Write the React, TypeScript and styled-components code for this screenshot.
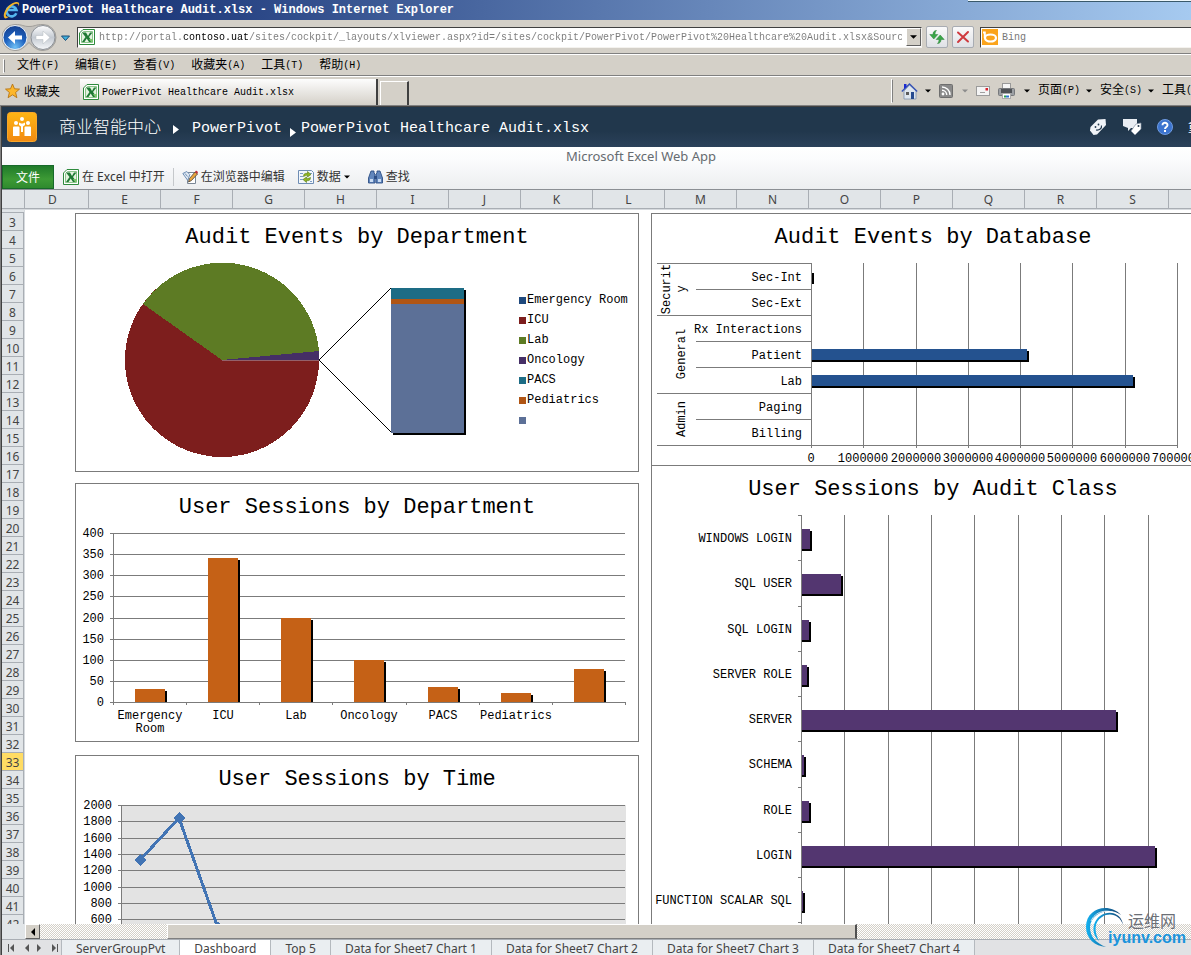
import React from 'react';
import styled, { createGlobalStyle } from 'styled-components';

const mono = `"Liberation Mono", "Noto Sans CJK SC", monospace`;
const ui = `"Noto Sans", "Noto Sans CJK SC", sans-serif`;
const chrome = '#d4d0c8';
const line = '#7b7b7b';

const GlobalStyle = createGlobalStyle`
  * { box-sizing: border-box; }
  body { margin: 0; overflow: hidden; background: ${chrome}; }
  button { border: 0; padding: 0; margin: 0; background: none; font: inherit; color: inherit; cursor: pointer; }
  input { border: 0; padding: 0; margin: 0; outline: 0; }
  h1, h2, ul { margin: 0; padding: 0; font-weight: normal; }
  ul { list-style: none; }
  svg { display: block; flex: none; }
`;

const Window = styled.div`
  display: flex;
  flex-direction: column;
  height: 100vh;
  overflow: hidden;
  font-family: ${mono};
  font-size: 12px;
  white-space: nowrap;
  color: #000;
`;

/* ---------- browser chrome ---------- */

const TitleBar = styled.header`
  display: flex;
  align-items: center;
  gap: 2px;
  height: 20px;
  flex: none;
  padding-left: 3px;
  color: #fff;
  background: linear-gradient(90deg, #0a246a, #a6caf0);
`;

const WindowTitle = styled.h1`
  flex: 1;
  font-size: 12px;
  line-height: 20px;
  font-weight: bold;
`;

const BackgroundWindow = styled.div`
  align-self: flex-start;
  width: 223px;
  height: 2px;
  background: #eef7fb;
  border-bottom: 1px solid #39596b;
`;

const AddressRow = styled.div`
  display: flex;
  align-items: center;
  height: 35px;
  flex: none;
  padding-left: 2px;
  background: ${chrome};
  border-bottom: 1px solid #fff;
  box-shadow: inset 0 -1px #808080;
`;

const NavButtons = styled.div`
  display: flex;
  align-items: center;
  width: 75px;
`;

const Field = styled.div<{ $grow?: boolean }>`
  display: flex;
  align-items: center;
  gap: 4px;
  height: 21px;
  padding-left: 1px;
  background: #fff;
  border: 1px solid #404040;
  border-color: #404040 #f4f2ee #f4f2ee #404040;
  overflow: hidden;
  ${p => (p.$grow ? 'flex: 1; min-width: 0;' : 'width: 211px; border-right: 0;')}
`;

const AddressInput = styled.input`
  flex: 1;
  min-width: 0;
  height: 16px;
  font-family: ${mono};
  font-size: 10px;
  color: transparent;
  background: linear-gradient(90deg, #7a7a7a 14ch, #000 14ch, #000 25ch, #7a7a7a 25ch);
  background-clip: text;
`;

const SearchInput = styled.input`
  flex: 1;
  min-width: 0;
  font-family: ${mono};
  font-size: 10px;
  color: #777;
  background: transparent;
  &::placeholder { color: #777; opacity: 1; }
`;

const DropButton = styled.button`
  display: flex;
  align-items: center;
  justify-content: center;
  width: 15px;
  height: 18px;
  background: ${chrome};
  border: 1px solid #fff;
  border-color: #fff #606060 #606060 #fff;
`;

const ScrollButton = styled(DropButton)`
  height: 15px;
`;

const SquareButton = styled.button`
  display: flex;
  align-items: center;
  justify-content: center;
  width: 22px;
  height: 22px;
  margin-left: 4px;
  border: 1px solid #a8acb2;
  border-radius: 2px;
  background: linear-gradient(#fafafa, #dfe1e6);
  &:last-of-type { margin-right: 6px; }
`;

const MenuBar = styled.nav`
  display: flex;
  align-items: center;
  gap: 16px;
  height: 22px;
  flex: none;
  padding-left: 3px;
  background: ${chrome};
  border-bottom: 1px solid #fff;
  box-shadow: inset 0 -1px #808080;
`;

const Handle = styled.span<{ $tall?: boolean }>`
  flex: none;
  width: 2px;
  height: ${p => (p.$tall ? 24 : 14)}px;
  margin-right: ${p => (p.$tall ? 0 : -4)}px;
  border: 1px solid #fff;
  border-right-color: #808080;
`;

const MenuButton = styled.button`
  display: flex;
  align-items: center;
  line-height: 20px;
`;

const CommandLabel = styled.span`
  display: flex;
  align-items: center;
`;

const AccessKey = styled.span`
  font-size: 10px;
`;

const TabsRow = styled.div`
  display: flex;
  align-items: center;
  height: 28px;
  flex: none;
  background: ${chrome};
`;

const Favorites = styled.button`
  display: flex;
  align-items: center;
  gap: 4px;
  width: 75px;
  margin-left: 5px;
`;

const PageTab = styled.button`
  display: flex;
  align-items: center;
  gap: 3px;
  align-self: flex-end;
  width: 298px;
  height: 26px;
  padding-left: 3px;
  font-size: 10px;
  background: linear-gradient(#fdfdfd, ${chrome});
  border-right: 2px solid #404040;
`;

const NewTab = styled.button`
  align-self: flex-end;
  width: 29px;
  height: 24px;
  margin-left: 2px;
  border: 1px solid #fff;
  border-right: 2px solid #404040;
  border-bottom: 0;
`;

const CommandBar = styled.div`
  display: flex;
  align-items: center;
  gap: 8px;
  width: 300px;
  margin-left: auto;
  overflow: hidden;
`;

const Command = styled.button<{ $gap?: number }>`
  display: flex;
  align-items: center;
  gap: ${p => p.$gap ?? 6}px;
  flex: none;
  line-height: 20px;
`;

/* ---------- portal page ---------- */

const Page = styled.main`
  display: flex;
  flex-direction: column;
  flex: 1;
  min-height: 0;
  padding: 1px 0 0 1px;
  border: solid #808080;
  border-width: 1px 0 0 1px;
  background: #404040;
`;

const Ribbon = styled.div`
  display: flex;
  align-items: center;
  height: 40px;
  flex: none;
  padding-left: 5px;
  color: #fff;
  background: linear-gradient(#21374c 60%, #2b415a);
`;

const Crumbs = styled.nav`
  display: flex;
  align-items: center;
  flex: 1;
  min-width: 0;
  margin-left: 22px;
  padding-top: 4px;
  font-size: 15px;
`;

const Crumb = styled.a<{ $cjk?: boolean }>`
  color: #fff;
  text-decoration: none;
  font-size: ${p => (p.$cjk ? 17 : 15)}px;
  font-weight: 300;
  line-height: 32px;
`;

const CrumbArrow = styled.span<{ $wide?: boolean }>`
  padding: ${p => (p.$wide ? '0 13px 0 12px' : '6px 5px 0 8px')};
`;

const PortalActions = styled.div`
  display: flex;
  align-items: center;
  gap: 15px;
  width: 102px;
  overflow: hidden;
`;

const PortalButton = styled.button`
  flex: none;
  font-size: 12px;
`;

const AppHead = styled.div`
  flex: none;
  font-family: ${ui};
  background: linear-gradient(#fff, #fbfcfd 30%, #eceef0);
  border-bottom: 1px solid #8b8f94;
`;

const AppName = styled.div`
  height: 18px;
  line-height: 18px;
  padding-right: 103px;
  padding-left: 192px;
  text-align: center;
  font-size: 13px;
  color: #666b70;
`;

const Tools = styled.div`
  display: flex;
  align-items: center;
  height: 24px;
  color: #333;
`;

const FileButton = styled.button`
  width: 52px;
  height: 24px;
  margin-right: 9px;
  color: #fff;
  line-height: 24px;
  background: linear-gradient(#1f7a2a, #3d9a35 60%, #2f8a2e);
  border: 1px solid #17692a;
`;

const Tool = styled.button<{ $after: number }>`
  display: flex;
  align-items: center;
  gap: 3px;
  margin-right: ${p => p.$after}px;
  line-height: 22px;
`;

const ToolDivider = styled.span`
  width: 1px;
  height: 18px;
  margin-right: 8px;
  background: #c5c8cb;
`;

/* ---------- worksheet ---------- */

const ColumnHeads = styled.div`
  display: flex;
  height: 20px;
  flex: none;
  overflow: hidden;
  font-family: ${ui};
  color: #444;
  background: #e1e5e8;
  border-bottom: 1px solid #d6dade;
`;

const ColumnHead = styled.div<{ $w: number; $cut?: number }>`
  width: ${p => p.$w - (p.$cut ?? 0)}px;
  padding-right: ${p => p.$cut ?? 0}px;
  flex: none;
  text-align: center;
  line-height: 20px;
  border: solid #a9aeb4;
  border-width: 0 1px 1px 0;
`;

const Sheet = styled.div`
  display: flex;
  flex: 1;
  min-height: 0;
  overflow: hidden;
  background: #fff;
`;

const RowHeads = styled.div`
  width: 23px;
  flex: none;
  padding-top: 2px;
  font-family: ${ui};
  color: #444;
  background: #e1e5e8;
  border-right: 1px solid #d6dade;
  overflow: hidden;
`;

const RowHead = styled.div<{ $active?: boolean }>`
  height: 18px;
  line-height: 20px;
  text-align: center;
  background: ${p => (p.$active ? '#ffdc64' : 'transparent')};
  border: solid #a9aeb4;
  border-width: 0 1px 1px 0;
  &:first-child { height: 1px; }
`;

const Dashboard = styled.div`
  display: flex;
  align-items: flex-start;
  gap: 12px;
  flex: 1;
  min-width: 0;
  padding: 3px 0 0 50px;
  overflow: hidden;
`;

const ChartColumn = styled.div`
  width: 564px;
  flex: none;
`;

const ChartCard = styled.section<{ $after?: number; $open?: boolean }>`
  border: 1px solid ${line};
  ${p => p.$open && 'border-bottom: 0;'}
  margin-bottom: ${p => p.$after ?? 0}px;
  background: #fff;
`;

const ChartTitle = styled.h2`
  padding-top: 2px;
  font-size: 22px;
  line-height: 44px;
  text-align: center;
`;

const ChartBody = styled.div`
  display: flex;
  align-items: flex-start;
`;

const Plot = styled.svg`
  overflow: visible;
  font-family: ${mono};
  font-size: 12px;
  shape-rendering: crispEdges;
`;

const Legend = styled.ul`
  padding-top: 30px;
`;

const LegendItem = styled.li<{ $color: string }>`
  display: flex;
  align-items: center;
  gap: 1px;
  height: 20px;
  &::before {
    content: '';
    width: 7px;
    height: 7px;
    background: ${p => p.$color};
  }
`;

const ScrollRow = styled.div`
  display: flex;
  height: 15px;
  flex: none;
  padding-left: 23px;
  background: #e1e5e8;
`;

const ScrollTrack = styled.div`
  display: flex;
  flex: 1;
  background: repeating-conic-gradient(${chrome} 0 25%, #fff 0 50%) 0 0 / 2px 2px;
`;

const ScrollThumb = styled.div`
  width: 60%;
  margin-left: 11%;
  background: ${chrome};
  border: 1px solid #fff;
  border-right: 2px solid #505050;
  border-bottom-color: #808080;
`;

const SheetBar = styled.nav`
  display: flex;
  height: 16px;
  flex: none;
  overflow: hidden;
  font-family: ${ui};
  color: #444;
  background: #e1e2e4;
  border-top: 1px solid #a9aeb4;
`;

const SheetNav = styled.div`
  display: flex;
  align-items: center;
  justify-content: space-between;
  width: 60px;
  padding: 0 2px 0 5px;
  border-right: 1px solid #b4b9be;
`;

const SheetTab = styled.button<{ $active?: boolean }>`
  padding: 0 14px;
  line-height: 18px;
  flex: none;
  background: ${p => (p.$active ? '#fff' : '#eaeef1')};
  border-right: 1px solid #b4b9be;
`;

const Watermark = styled.div`
  position: absolute;
  right: 4px;
  bottom: 6px;
  display: flex;
  color: #6b6f76;
`;

const WatermarkText = styled.div`
  display: flex;
  flex-direction: column;
  align-items: flex-end;
  margin-left: -18px;
  padding: 4px 1px 0 0;
  font-family: "Noto Sans CJK SC", sans-serif;
  font-size: 16px;
  line-height: 18px;
`;

const WatermarkTop = styled.span`
  padding-right: 10px;
`;

const WatermarkSite = styled.span`
  font-family: "Liberation Sans", sans-serif;
  font-weight: bold;
  color: #1a94dc;
`;

/* ---------- icons ---------- */

const Caret = ({ color = '#000', w = 7 }: { color?: string; w?: number }) => (
  <svg width={w} height={4} viewBox="0 0 8 4"><path d="M0 0h8L4 4z" fill={color} /></svg>
);

const RightArrow = () => (
  <svg width="6" height="9" viewBox="0 0 6 9"><path d="M0 0l6 4.500-6 4.500z" fill="#fff" /></svg>
);

const IeIcon = () => (
  <svg width="17" height="18" viewBox="0 0 17 18">
    <path d="M13.300 12.300A5 5 0 1 1 13.500 9H5" fill="none" stroke="#55b7ee" strokeWidth="2.600" />
    <path d="M1.500 17C-1.500 13 5 3 12 1.200c4-1 5 1 3.500 4.300.5-3-2-3.500-5.500-1.500C6 6.500 2 12 3 15c.5 1 2 .8 3.500 0-2 2-4 3-5 2z" fill="#f3b52a" />
  </svg>
);

const ExcelIcon = () => (
  <svg width="16" height="16" viewBox="0 0 16 16">
    <path d="M4 .5h11.500v15H.5V4z" fill="#fff" stroke="#2e8b3d" />
    <path d="M2.500 4.500L4.500 2.500h9v11h-11z" fill="#e3f3df" stroke="#8cc58b" />
    <path d="M3 3.500h4l2 3.500 2-3.500h2.500L10 8l3.500 5H10L7.700 9.500 5.500 13H3l3.500-5z" fill="#1f7a34" />
    <path d="M10 10l2 3h2v-3z" fill="#7cc66f" />
  </svg>
);

const NavIcon = () => (
  <svg width="69" height="27" viewBox="0 0 69 27">
    <defs>
      <radialGradient id="back" cx=".5" cy=".9" r=".9"><stop offset="0" stopColor="#6fc0f5" /><stop offset=".5" stopColor="#1e62c0" /><stop offset="1" stopColor="#16408f" /></radialGradient>
      <linearGradient id="fwd" x2="0" y2="1"><stop offset="0" stopColor="#fff" /><stop offset=".5" stopColor="#c4cad2" /><stop offset="1" stopColor="#f6f8fa" /></linearGradient>
    </defs>
    <path d="M13 .5c8 0 8 2 14 2s6-2 14-2a13 13 0 0 1 0 26c-6 0-9-3-14-8-5 5-8 8-14 8a13 13 0 0 1 0-26z" fill="#c4c2be" stroke="#a09e9a" />
    <circle cx="13" cy="13.500" r="12" fill="url(#back)" stroke="#eef3f8" />
    <circle cx="41" cy="13.500" r="12" fill="url(#fwd)" stroke="#8b9096" />
    <path d="M6 13.500l7-6.500v4.500h7v4h-7V20z" fill="#fff" />
    <path d="M48 13.500L41 7v4.500h-7v4h7V20z" fill="#fff" stroke="#b3b8be" strokeWidth=".5" />
    <path d="M59.500 12h8l-4 4.500z" fill="#3fb0de" stroke="#1b4f78" />
  </svg>
);

const RefreshIcon = () => (
  <svg width="16" height="16" viewBox="0 0 16 16">
    <path d="M7.500 1.500C4.500 1.500 4 4 4 5.500H.8L4.800 10l4-4.500H6C6 4 6.500 2.500 7.500 1.500z" fill="#3aa648" stroke="#2b8038" strokeWidth=".5" />
    <path d="M8.500 14.500c3 0 3.500-2.500 3.500-4h3.200L11.200 6l-4 4.500H10c0 1.500-.5 3-1.500 4z" fill="#3aa648" stroke="#2b8038" strokeWidth=".5" />
  </svg>
);

const StopIcon = () => (
  <svg width="14" height="14" viewBox="0 0 14 14"><path d="M2 2.500l10 9M12 2L2 12" stroke="#cf3a3f" strokeWidth="2" strokeLinecap="round" /></svg>
);

const BingIcon = () => (
  <svg width="16" height="16" viewBox="0 0 16 16">
    <rect width="16" height="16" fill="#fba41c" />
    <path d="M1 3.500h1.800V9" fill="none" stroke="#fff" strokeWidth="2" />
    <ellipse cx="8.500" cy="9" rx="5.500" ry="3.500" fill="none" stroke="#fff" strokeWidth="2.200" />
  </svg>
);

const StarIcon = () => (
  <svg width="15" height="16" viewBox="0 0 15 16"><path d="M7.500 1l2 4.800 5 .3-3.900 3.400 1.300 5.200-4.400-2.900-4.400 2.900 1.300-5.200L.5 6.100l5-.3z" fill="#fdb72b" stroke="#b77413" strokeWidth=".9" /></svg>
);

const HouseIcon = () => (
  <svg width="17" height="17" viewBox="0 0 17 17">
    <path d="M3 8v8h12V8L8.500 2z" fill="#dfe6ee" stroke="#7e93ae" strokeWidth=".8" />
    <path d="M.8 8.500L8.500 1l7.700 7.500" fill="none" stroke="#3451b5" strokeWidth="1.300" />
    <path d="M3 1h2.500v3L3 6z" fill="#1a2ad0" />
    <rect x="5" y="9" width="3" height="3" fill="#5b5b5b" /><rect x="10" y="9" width="3" height="7" fill="#274b8f" />
  </svg>
);

const RssIcon = () => (
  <svg width="14" height="14" viewBox="0 0 14 14">
    <rect x=".5" y=".5" width="13" height="13" rx="1" fill="#8a8a8a" stroke="#6e6e6e" />
    <circle cx="4" cy="10" r="1.400" fill="#fff" />
    <path d="M3 6.200a5 5 0 0 1 4.800 4.800M3 3a8 8 0 0 1 8 8" fill="none" stroke="#fff" strokeWidth="1.400" />
  </svg>
);

const MailIcon = () => (
  <svg width="14" height="10" viewBox="0 0 14 10">
    <rect x=".5" y=".5" width="13" height="9" fill="#f4f4f4" stroke="#9b9b9b" />
    <rect x="9.500" y="2" width="2.500" height="2.500" fill="#d8232e" /><path d="M4 6.500h5" stroke="#a0a0a0" />
  </svg>
);

const PrinterIcon = () => (
  <svg width="17" height="16" viewBox="0 0 17 16">
    <rect x="4.500" y=".5" width="8" height="6" fill="#f6f6f6" stroke="#999" />
    <rect x=".5" y="5.500" width="16" height="7" rx="1" fill="#9c9fa3" stroke="#77797c" />
    <rect x="3" y="6" width="11" height="4" fill="#505357" />
    <rect x="4.500" y="10.500" width="8" height="5" fill="#fff" stroke="#aaa" />
    <path d="M6 13.500h2" stroke="#2aa34a" strokeWidth="2" /><path d="M8 13.500h3" stroke="#2f74d0" strokeWidth="2" />
  </svg>
);

const PortalLogo = () => (
  <svg width="30" height="30" viewBox="0 0 30 30">
    <defs><linearGradient id="logo" x2="0" y2="1"><stop offset="0" stopColor="#fdb515" /><stop offset="1" stopColor="#f28a12" /></linearGradient></defs>
    <rect x=".5" y=".5" width="29" height="29" rx="3" fill="url(#logo)" stroke="#f9a62a" />
    <g fill="#fff">
      <circle cx="15" cy="7" r="2" /><circle cx="9" cy="11" r="2" /><circle cx="21" cy="11" r="2" />
      <path d="M12 10.500l2 1h2l2-1v2.500L16 14.500V20h-2v-5.500L12 13z" />
      <path d="M6 15.500q0-1 1-1h4.500q1 0 1 1V24H6zM17.500 15.500q0-1 1-1H23q1 0 1 1V24h-6.500z" />
    </g>
  </svg>
);

const TagIcon = () => (
  <svg width="18" height="18" viewBox="0 0 18 18">
    <path d="M9 1.500L16.500 1l.5 6-9 9.500-3.500.5L1 12.500 1.500 9z" fill="#f0f3f8" />
    <path d="M7 12c3.500.5 6-1.500 5.500-4.500" fill="none" stroke="#21374c" strokeWidth="1.200" />
    <circle cx="6.500" cy="9" r=".9" fill="#21374c" /><circle cx="9.500" cy="6.500" r=".9" fill="#21374c" />
  </svg>
);

const NotesIcon = () => (
  <svg width="20" height="18" viewBox="0 0 20 18">
    <path d="M1 1h14v7l-3 2H9l-3 3v-3L1 8z" fill="#e9edf3" />
    <path d="M14 6l5-1v6l-6 6-4-4z" fill="#fff" stroke="#8592a5" strokeWidth=".7" /><circle cx="16.500" cy="8" r="1" fill="#21374c" />
  </svg>
);

const HelpIcon = () => (
  <svg width="16" height="16" viewBox="0 0 16 16">
    <circle cx="8" cy="8" r="7.500" fill="#3c74cf" stroke="#6f9be0" />
    <path d="M5.500 6.200c0-3.400 5.200-3 5 0C10.400 8 8 8 8 10" fill="none" stroke="#fff" strokeWidth="1.900" /><rect x="7" y="11" width="2" height="2" fill="#fff" />
  </svg>
);

const EditIcon = () => (
  <svg width="16" height="16" viewBox="0 0 16 16">
    <path d="M5.500 3.500h8v11h-8z" fill="#fff" stroke="#7a8796" />
    <path d="M.8 4.500l4-2 3 3-2 6z" fill="#dfe8f2" stroke="#6f8fb5" /><path d="M3 4.500l2.500 3" stroke="#6f8fb5" />
    <path d="M6.500 13l1-3.500L13 3l2.500 2-6 6.500z" fill="#e9a33c" stroke="#5c5244" strokeWidth=".9" /><path d="M13 3l1-1.500 2 1.500-.7 2z" fill="#c22a35" />
  </svg>
);

const DataIcon = () => (
  <svg width="16" height="16" viewBox="0 0 16 16">
    <path d="M.5 1.500h13l2 2v11H.5z" fill="#f3f7fb" stroke="#6e8db4" />
    <path d="M2 4.500h3M2 7.500h3M2 10.500h3M12 4.500h2M12 12.500h2" stroke="#7d9cc4" />
    <path d="M5.500 7.500c0-3 2-3.500 4-3V2.500L13 5.500 9.500 8V6.300c-1.500 0-2 .5-4 1.200zM12.500 8.500c0 3-2 3.500-4 3v2L5 10.500 8.500 8v1.700c1.500 0 2-.5 4-1.200z" fill="#8fb41f" stroke="#567a12" strokeWidth=".6" />
  </svg>
);

const FindIcon = () => (
  <svg width="15" height="14" viewBox="0 0 15 14">
    <path d="M3 1h3v2l1 1v9H.5V8zM12 1H9v2L8 4v9h6.500V8z" fill="#6287bd" stroke="#2d4f86" strokeWidth=".9" />
    <path d="M2 9h3v3H2zM10 9h3v3h-3z" fill="#c9dcf3" /><path d="M6 6h3v3H6z" fill="#2d4f86" />
  </svg>
);

const StepIcon = ({ dir, end }: { dir: 1 | -1; end?: boolean }) => (
  <svg width="8" height="8" viewBox="0 0 8 8">
    <path d={dir === 1 ? 'M1 0l4 4-4 4z' : 'M7 0L3 4l4 4z'} fill="#555" />
    {end && <rect x={dir === 1 ? 6 : 1} width="1" height="8" fill="#555" />}
  </svg>
);

const SwooshIcon = () => (
  <svg width="40" height="42" viewBox="0 0 40 42">
    <defs><linearGradient id="swoosh" x2="1" y2="0"><stop offset="0" stopColor="#13b0f0" /><stop offset="1" stopColor="#14406f" /></linearGradient></defs>
    <g fill="url(#swoosh)">
      <path d="M35 8C23-5 0 1 0 20c0 12 9 19 20 20C10 36 4 30 4 20 5 6 23-1 35 8z" />
      <path d="M37 18C36 7 24 2 14 9 5 16 6 28 13 34 8 24 8 15 16 10c8-5 18-2 21 8z" />
    </g>
    <path d="M31 7C20 1 9 5 5 14" fill="none" stroke="#fff" strokeWidth=".8" />
  </svg>
);

/* ---------- charts ---------- */

const legend: [string, string][] = [
  ['Emergency Room', '#1f497d'], ['ICU', '#7d1e1d'], ['Lab', '#5d7b24'], ['Oncology', '#452f66'],
  ['PACS', '#1d6c85'], ['Pediatrics', '#b05514'], ['', '#5c7097'],
];

const EventsByDepartment = () => (
  <ChartBody>
    <Plot width="443" height="211">
      <circle cx="146" cy="100" r="97" fill="#7d1e1d" />
      <path d="M146 100L67 44A97 97 0 0 1 243 91z" fill="#5d7b24" />
      <path d="M146 100L243 91V100z" fill="#452f66" />
      <path d="M146 100.500H243" stroke="#95616a" />
      <path d="M315 28L243 100L315 172" fill="none" stroke="#000" />
      <rect x="317" y="30" width="73" height="145" />
      <rect x="315" y="28" width="73" height="11" fill="#1d6c85" />
      <rect x="315" y="39" width="73" height="5" fill="#b05514" />
      <rect x="315" y="44" width="73" height="129" fill="#5c7097" />
    </Plot>
    <Legend>{legend.map(([t, c]) => <LegendItem key={c} $color={c}>{t}</LegendItem>)}</Legend>
  </ChartBody>
);

const departments: [string[], number][] = [
  [['Emergency', 'Room'], 30], [['ICU'], 341], [['Lab'], 200], [['Oncology'], 100], [['PACS'], 36], [['Pediatrics'], 22], [[], 79],
];

const SessionsByDepartment = () => {
  const y = (v: number) => Math.round(172 - (v * 169) / 400);
  const x = (i: number) => Math.round(37 + (i * 512) / 7);
  return (
    <Plot width="562" height="211">
      {[0, 50, 100, 150, 200, 250, 300, 350, 400].map(v => (
        <g key={v}>
          <rect x="34" y={y(v)} width="515" height="1" fill={line} />
          <text x="28" y={y(v) + 4} textAnchor="end">{v}</text>
        </g>
      ))}
      <rect x="37" y="3" width="1" height="172" fill={line} />
      {departments.map(([names, v], i) => (
        <g key={i}>
          <rect x={x(i) + 24} y={y(v) + 2} width="30" height={170 - y(v)} />
          <rect x={x(i) + 22} y={y(v)} width="30" height={172 - y(v)} fill="#c56116" />
          <rect x={x(i + 1)} y="172" width="1" height="3" fill={line} />
          {names.map((n, k) => <text key={n} x={x(i) + 37} y={189 + k * 13} textAnchor="middle">{n}</text>)}
        </g>
      ))}
    </Plot>
  );
};

const sessionTimes = [1320, 1840, 490, 440];

const SessionsByTime = () => {
  const y = (v: number) => Math.round(166 - (v * 163) / 2000);
  const pts = sessionTimes.map((v, i) => [64 + i * 39, y(v)]);
  return (
    <Plot width="562" height="211">
      <rect x="45" y="3" width="505" height="163" fill="#e3e3e3" />
      {[0, 200, 400, 600, 800, 1000, 1200, 1400, 1600, 1800, 2000].map(v => (
        <g key={v}>
          <rect x="42" y={y(v)} width="507" height="1" fill={line} />
          <text x="36" y={y(v) + 4} textAnchor="end">{v}</text>
        </g>
      ))}
      <rect x="45" y="3" width="1" height="166" fill={line} />
      <polyline points={pts.map(p => p.join()).join(' ')} fill="none" stroke="#4274b4" strokeWidth="3" />
      {pts.map(([px, py]) => <path key={px} d={`M${px} ${py - 6}l6 6-6 6-6-6z`} fill="#4274b4" />)}
    </Plot>
  );
};

const databases: [string, number][] = [
  ['Sec-Int', 0], ['Sec-Ext', 0], ['Rx Interactions', 0], ['Patient', 4140000], ['Lab', 6150000], ['Paging', 0], ['Billing', 0],
];

const EventsByDatabase = () => {
  const x = (v: number) => Math.round(159 + (v * 366) / 7000000);
  return (
    <Plot width="562" height="205">
      {[0, 1, 2, 3, 4, 5, 6, 7].map(m => (
        <g key={m}>
          <rect x={x(m * 1e6)} y="3" width="1" height="185" fill={line} />
          <text x={x(m * 1e6)} y="202" textAnchor="middle">{m * 1000000}</text>
        </g>
      ))}
      {[0, 1, 2, 3, 4, 5, 6, 7].map(i => {
        const group = [0, 2, 5, 7].includes(i);
        return <rect key={i} x={group ? 5 : 44} y={3 + i * 26} width={(i === 7 ? 525 : 159) - (group ? 5 : 44)} height="1" fill={line} />;
      })}
      {databases.map(([n, v], i) => (
        <g key={n}>
          <text x="150" y={21 + i * 26} textAnchor="end">{n}</text>
          {v > 0 && <rect x="160" y={13 + i * 26} width={x(v) - 158} height="11" />}
          {v > 0 && <rect x="160" y={11 + i * 26} width={x(v) - 160} height="11" fill="#24528f" />}
        </g>
      ))}
      <rect x="160" y="13" width="2" height="11" />
      <text transform="translate(18 29) rotate(-90)" textAnchor="middle">Securit</text>
      <text transform="translate(33 29) rotate(-90)" textAnchor="middle">y</text>
      <text transform="translate(33 94) rotate(-90)" textAnchor="middle">General</text>
      <text transform="translate(33 159) rotate(-90)" textAnchor="middle">Admin</text>
    </Plot>
  );
};

const auditClasses: [string, number][] = [
  ['WINDOWS LOGIN', 8], ['SQL USER', 39], ['SQL LOGIN', 7], ['SERVER ROLE', 5], ['SERVER', 314],
  ['SCHEMA', 2], ['ROLE', 7], ['LOGIN', 353], ['FUNCTION SCALAR SQL', 1],
];

const SessionsByClass = () => {
  const y = (i: number) => Math.round(3 + i * 45.25);
  return (
    <Plot width="562" height="502">
      {[0, 1, 2, 3, 4, 5, 6, 7, 8].map(i => (
        <rect key={i} x={Math.round(149 + i * 43.35)} y="3" width="1" height="499" fill={line} />
      ))}
      {auditClasses.map(([n, w], i) => (
        <g key={n}>
          <rect x="146" y={y(i)} width="3" height="1" fill={line} />
          <rect x="150" y={y(i) + 16} width={w + 2} height="20" />
          <rect x="150" y={y(i) + 14} width={w} height="20" fill="#533670" />
          <text x="140" y={y(i) + 27} textAnchor="end">{n}</text>
        </g>
      ))}
      <rect x="146" y={y(9)} width="3" height="1" fill={line} />
    </Plot>
  );
};

/* ---------- page data ---------- */

const menus = [['文件', 'F'], ['编辑', 'E'], ['查看', 'V'], ['收藏夹', 'A'], ['工具', 'T'], ['帮助', 'H']];
const sheetTabs = ['ServerGroupPvt', 'Dashboard', 'Top 5', 'Data for Sheet7 Chart 1', 'Data for Sheet7 Chart 2', 'Data for Sheet7 Chart 3', 'Data for Sheet7 Chart 4'];
const columns = 'DEFGHIJKLMNOPQRST'.split('');
const rows = Array.from({ length: 40 }, (_, i) => i + 3);
const address = 'http://portal.contoso.uat/sites/cockpit/_layouts/xlviewer.aspx?id=/sites/cockpit/PowerPivot/PowerPivot%20Healthcare%20Audit.xlsx&Source=';

export default function App() {
  return (
    <Window>
      <GlobalStyle />
      <TitleBar>
        <IeIcon />
        <WindowTitle>PowerPivot Healthcare Audit.xlsx - Windows Internet Explorer</WindowTitle>
        <BackgroundWindow />
      </TitleBar>
      <AddressRow>
        <NavButtons><button aria-label="Back and forward"><NavIcon /></button></NavButtons>
        <Field $grow>
          <ExcelIcon />
          <AddressInput aria-label="Address" defaultValue={address} />
          <DropButton aria-label="Show addresses"><Caret /></DropButton>
        </Field>
        <SquareButton aria-label="Refresh"><RefreshIcon /></SquareButton>
        <SquareButton aria-label="Stop"><StopIcon /></SquareButton>
        <Field>
          <BingIcon />
          <SearchInput aria-label="Search" placeholder="Bing" />
        </Field>
      </AddressRow>
      <MenuBar>
        <Handle />
        {menus.map(([t, k]) => <MenuButton key={k}>{t}<AccessKey>({k})</AccessKey></MenuButton>)}
      </MenuBar>
      <TabsRow>
        <Favorites><StarIcon />收藏夹</Favorites>
        <PageTab><ExcelIcon />PowerPivot Healthcare Audit.xlsx</PageTab>
        <NewTab aria-label="New tab" />
        <CommandBar>
          <Handle $tall />
          <Command $gap={7} aria-label="Home"><HouseIcon /><Caret w={6} /></Command>
          <Command $gap={9} aria-label="Feeds"><RssIcon /><Caret w={6} color="#8c8c8c" /></Command>
          <Command aria-label="Mail"><MailIcon /></Command>
          <Command $gap={9} aria-label="Print"><PrinterIcon /><Caret w={6} /></Command>
          <Command><CommandLabel>页面<AccessKey>(P)</AccessKey></CommandLabel><Caret w={6} /></Command>
          <Command><CommandLabel>安全<AccessKey>(S)</AccessKey></CommandLabel><Caret w={6} /></Command>
          <Command><CommandLabel>工具<AccessKey>(O)</AccessKey></CommandLabel></Command>
        </CommandBar>
      </TabsRow>
      <Page>
        <Ribbon>
          <PortalLogo />
          <Crumbs>
            <Crumb href="#center" $cjk>商业智能中心</Crumb>
            <CrumbArrow $wide><RightArrow /></CrumbArrow>
            <Crumb href="#powerpivot">PowerPivot</Crumb>
            <CrumbArrow><RightArrow /></CrumbArrow>
            <Crumb href="#workbook">PowerPivot Healthcare Audit.xlsx</Crumb>
          </Crumbs>
          <PortalActions>
            <PortalButton aria-label="I like it"><TagIcon /></PortalButton>
            <PortalButton aria-label="Tags and notes"><NotesIcon /></PortalButton>
            <PortalButton aria-label="Help"><HelpIcon /></PortalButton>
            <PortalButton>重</PortalButton>
          </PortalActions>
        </Ribbon>
        <AppHead>
          <AppName>Microsoft Excel Web App</AppName>
          <Tools>
            <FileButton>文件</FileButton>
            <Tool $after={8}><ExcelIcon />在 Excel 中打开</Tool>
            <ToolDivider />
            <Tool $after={13}><EditIcon />在浏览器中编辑</Tool>
            <Tool $after={18}><DataIcon />数据 <Caret w={6} /></Tool>
            <Tool $after={0}><FindIcon />查找</Tool>
          </Tools>
        </AppHead>
        <ColumnHeads>
          <ColumnHead $w={23} />
          {columns.map((c, i) => <ColumnHead key={c} $w={72} $cut={i === 0 ? 8 : 0}>{c}</ColumnHead>)}
        </ColumnHeads>
        <Sheet>
          <RowHeads>
            <RowHead />
            {rows.map(r => <RowHead key={r} $active={r === 33}>{r}</RowHead>)}
          </RowHeads>
          <Dashboard>
            <ChartColumn>
              <ChartCard $after={11}>
                <ChartTitle>Audit Events by Department</ChartTitle>
                <EventsByDepartment />
              </ChartCard>
              <ChartCard $after={13}>
                <ChartTitle>User Sessions by Department</ChartTitle>
                <SessionsByDepartment />
              </ChartCard>
              <ChartCard>
                <ChartTitle>User Sessions by Time</ChartTitle>
                <SessionsByTime />
              </ChartCard>
            </ChartColumn>
            <ChartColumn>
              <ChartCard $open>
                <ChartTitle>Audit Events by Database</ChartTitle>
                <EventsByDatabase />
              </ChartCard>
              <ChartCard>
                <ChartTitle>User Sessions by Audit Class</ChartTitle>
                <SessionsByClass />
              </ChartCard>
            </ChartColumn>
          </Dashboard>
        </Sheet>
        <ScrollRow>
          <ScrollButton aria-label="Scroll left"><svg width="4" height="8" viewBox="0 0 4 8"><path d="M4 0v8L0 4z" /></svg></ScrollButton>
          <ScrollTrack><ScrollThumb /></ScrollTrack>
        </ScrollRow>
        <SheetBar>
          <SheetNav>
            <button aria-label="First sheet"><StepIcon dir={-1} end /></button>
            <button aria-label="Previous sheet"><StepIcon dir={-1} /></button>
            <button aria-label="Next sheet"><StepIcon dir={1} /></button>
            <button aria-label="Last sheet"><StepIcon dir={1} end /></button>
          </SheetNav>
          {sheetTabs.map(t => <SheetTab key={t} $active={t === 'Dashboard'}>{t}</SheetTab>)}
        </SheetBar>
      </Page>
      <Watermark>
        <SwooshIcon />
        <WatermarkText>
          <WatermarkTop>运维网</WatermarkTop>
          <WatermarkSite>iyunv.com</WatermarkSite>
        </WatermarkText>
      </Watermark>
    </Window>
  );
}
